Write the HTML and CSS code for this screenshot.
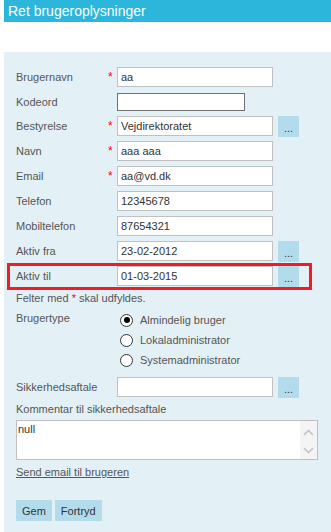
FILE: index.html
```html
<!DOCTYPE html>
<html lang="da">
  <head>
    <meta charset="UTF-8" />
    <meta name="viewport" content="width=device-width, initial-scale=1.0" />
    <title>Ret brugeroplysninger</title>
    <link rel="stylesheet" href="styles.css">
  </head>
  <body>
    <div class="header">Ret brugeroplysninger</div>
    <form class="panel">
      <div class="row">
        <label class="lbl">Brugernavn</label><span class="req">*</span>
        <input type="text" class="field" value="aa" />
      </div>
      <div class="row short">
        <label class="lbl">Kodeord</label><span class="req"></span>
        <input type="password" class="field pw" />
      </div>
      <div class="row">
        <label class="lbl">Bestyrelse</label><span class="req">*</span>
        <input type="text" class="field" value="Vejdirektoratet" />
        <button type="button" class="pick">...</button>
      </div>
      <div class="row">
        <label class="lbl">Navn</label><span class="req">*</span>
        <input type="text" class="field" value="aaa aaa" />
      </div>
      <div class="row">
        <label class="lbl">Email</label><span class="req">*</span>
        <input type="text" class="field" value="aa@vd.dk" />
      </div>
      <div class="row">
        <label class="lbl">Telefon</label><span class="req"></span>
        <input type="text" class="field" value="12345678" />
      </div>
      <div class="row">
        <label class="lbl">Mobiltelefon</label><span class="req"></span>
        <input type="text" class="field" value="87654321" />
      </div>
      <div class="row">
        <label class="lbl">Aktiv fra</label><span class="req"></span>
        <input type="text" class="field" value="23-02-2012" />
        <button type="button" class="pick">...</button>
      </div>
      <div class="row marked">
        <label class="lbl">Aktiv til</label><span class="req"></span>
        <input type="text" class="field" value="01-03-2015" />
        <button type="button" class="pick">...</button>
      </div>

      <div class="note">Felter med <span class="star">*</span> skal udfyldes.</div>

      <div class="types">
        <div class="lbl wide">Brugertype</div>
        <div class="options">
          <label class="opt"><input type="radio" name="type" checked /> Almindelig bruger</label>
          <label class="opt"><input type="radio" name="type" /> Lokaladministrator</label>
          <label class="opt"><input type="radio" name="type" /> Systemadministrator</label>
        </div>
      </div>

      <div class="row agreement">
        <label class="lbl">Sikkerhedsaftale</label><span class="req"></span>
        <input type="text" class="field" />
        <button type="button" class="pick">...</button>
      </div>

      <div class="caption">Kommentar til sikkerhedsaftale</div>
      <div class="memo">
        <textarea class="memo-text">null</textarea>
        <div class="scroll">
          <svg width="11" height="7" viewBox="0 0 11 7"><path d="M1 6 L5.5 1.5 L10 6" fill="none" stroke="#c4c4c4" stroke-width="1.6"/></svg>
          <svg width="11" height="7" viewBox="0 0 11 7"><path d="M1 1 L5.5 5.5 L10 1" fill="none" stroke="#c4c4c4" stroke-width="1.6"/></svg>
        </div>
      </div>

      <a href="#" class="mail">Send email til brugeren</a>

      <div class="actions">
        <button type="button" class="btn">Gem</button>
        <button type="button" class="btn">Fortryd</button>
      </div>
    </form>
  </body>
</html>
```

FILE: styles.css
```css
body {
  margin: 0 0 0 4px;
  font-family: "Liberation Sans", Arial, sans-serif;
  font-size: 11px;
  color: #555;
}
.header {
  height: 22px;
  line-height: 22px;
  background-color: #2db6db;
  color: #fff;
  font-size: 14px;
  padding-left: 4px;
}
.panel {
  margin-top: 30px;
  background-color: #e3f1f7;
  padding: 15px 12px 11px 12px;
}
.row {
  display: flex;
  align-items: center;
  height: 20px;
  margin-bottom: 5px;
}
.row.short {
  height: 19px;
}
.lbl {
  width: 92px;
  color: #555;
}
.lbl.wide {
  width: 101px;
}
.req {
  width: 9px;
  color: #f00;
  font-size: 12px;
}
.field {
  box-sizing: border-box;
  width: 156px;
  height: 20px;
  margin: 0;
  padding: 0 3px;
  border: 1px solid #c0c0c0;
  background: #fff;
  font-family: "Liberation Sans", Arial, sans-serif;
  font-size: 11px;
  color: #333;
  outline: none;
}
.field.pw {
  width: 128px;
  height: 18px;
  border-color: #707070;
}
.pick {
  width: 21px;
  height: 21px;
  margin: 0 0 0 5px;
  padding: 3px 0 0 0;
  border: none;
  background-color: #b2dcec;
  color: #333;
  font-family: "Liberation Sans", Arial, sans-serif;
  font-size: 11px;
  line-height: 12px;
}
.marked {
  position: relative;
}
.marked::after {
  content: "";
  position: absolute;
  top: -3px;
  bottom: -4px;
  left: -9px;
  right: 7px;
  border: 3px solid #ed1c28;
  pointer-events: none;
}
.star {
  color: #f00;
}
.note {
  line-height: 14px;
}
.types {
  display: flex;
  margin-top: 5px;
}
.types .lbl {
  line-height: 16px;
}
.options {
  display: flex;
  flex-direction: column;
}
.opt {
  display: flex;
  align-items: center;
  height: 20px;
  color: #555;
}
.opt input {
  appearance: none;
  -webkit-appearance: none;
  box-sizing: border-box;
  width: 13px;
  height: 13px;
  margin: 0 7px 0 3px;
  border: 1px solid #333;
  border-radius: 50%;
  background: #fff;
  position: relative;
}
.opt input:checked::after {
  content: "";
  position: absolute;
  top: 2.5px;
  left: 2.5px;
  width: 6px;
  height: 6px;
  border-radius: 50%;
  background: #000;
}
.agreement {
  margin-top: 7px;
}
.caption {
  line-height: 14px;
}
.memo {
  box-sizing: border-box;
  display: flex;
  width: 302px;
  height: 40px;
  margin-top: 4px;
  border: 1px solid #c0c0c0;
  background: #fff;
}
.memo-text {
  flex: 1;
  margin: 0;
  padding: 2px 1px;
  border: none;
  resize: none;
  overflow: hidden;
  font-family: "Liberation Sans", Arial, sans-serif;
  font-size: 11px;
  color: #333;
  outline: none;
}
.scroll {
  width: 17px;
  background: #f4f4f4;
  display: flex;
  flex-direction: column;
  align-items: center;
  justify-content: space-between;
  padding: 8px 0 5px 0;
}
.mail {
  display: block;
  margin-top: 5px;
  line-height: 14px;
  color: #555;
}
.actions {
  display: flex;
  gap: 3px;
  margin-top: 21px;
}
.btn {
  height: 21px;
  margin: 0;
  padding: 0 6px;
  border: none;
  background-color: #b2dcec;
  color: #333;
  font-family: "Liberation Sans", Arial, sans-serif;
  font-size: 11px;
}
```
